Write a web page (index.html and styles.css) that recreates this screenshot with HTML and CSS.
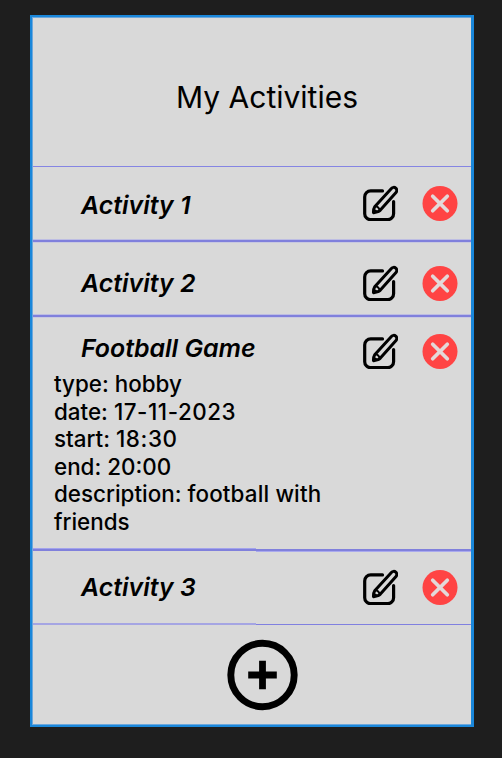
FILE: index.html
```
<!DOCTYPE html>
<html lang="en">
<head>
<meta charset="utf-8">
<title>My Activities</title>
<link rel="stylesheet" href="styles.css">
</head>
<body>
<svg class="symbols" aria-hidden="true">
  <symbol id="edit" viewBox="0 0 36 36">
    <g fill="none" stroke="#000" stroke-width="3.200" stroke-linecap="round" stroke-linejoin="round">
      <path d="M20.500 5.900H8.700a6 6 0 0 0-6 6v16.800a6 6 0 0 0 6 6h16.900a6 6 0 0 0 6-6V16.500"/>
      <path stroke-width="3" d="M12.700 21.700 29.400 3.400a3 3 0 0 1 4.600 4.100L18.400 25.100a8 8 0 0 1-2.200 1.400l-4.700 1.200Q11.300 24 12.700 21.700Z"/>
      <path stroke-width="2" d="M13.200 21.300q3.800.200 4.400 4.300"/>
    </g>
    <path d="m11.300 27.800 .7-3.800q3 .400 3.400 2.900Z"/>
  </symbol>
  <symbol id="remove" viewBox="0 0 36 36">
    <circle cx="18" cy="18.500" r="17.500" fill="#ff4444"/>
    <path d="m10.700 11.200 14.600 14.600m0-14.600L10.700 25.800" fill="none" stroke="#e3d9d9" stroke-width="3.700" stroke-linecap="round"/>
  </symbol>
</svg>
<main class="panel">
  <header class="header"><h1>My Activities</h1></header>
  <section class="row first">
    <h2>Activity 1</h2>
    <div class="actions"><svg><use href="#edit"/></svg><svg><use href="#remove"/></svg></div>
  </section>
  <section class="row second">
    <h2>Activity 2</h2>
    <div class="actions"><svg><use href="#edit"/></svg><svg><use href="#remove"/></svg></div>
  </section>
  <section class="row expanded">
    <h2>Football Game</h2>
    <div class="actions"><svg><use href="#edit"/></svg><svg><use href="#remove"/></svg></div>
    <p class="details">type: hobby<br>date: <span class="date">17-11-2023</span><br>start: <span class="time">18:30</span><br>end: 20:00<br>description: <span class="text">football with</span><br>friends</p>
    <div class="rule"></div>
  </section>
  <section class="row last">
    <h2>Activity 3</h2>
    <div class="actions"><svg><use href="#edit"/></svg><svg><use href="#remove"/></svg></div>
    <div class="rule thin"></div>
  </section>
  <footer class="footer">
    <svg class="add" viewBox="0 0 70 70"><circle cx="35.500" cy="35" r="31.700" fill="none" stroke="#000" stroke-width="6.900"/><path d="M35.500 20.700v28.600M21.200 35h28.600" stroke="#000" stroke-width="6.800"/></svg>
  </footer>
</main>
</body>
</html>
```
FILE: styles.css
```
* { box-sizing: border-box; }
body {
  margin: 0;
  height: 758px;
  padding: 15px 28px 0 30px;
  background: #1e1e1e;
  color: #000;
  font-family: Inter, sans-serif;
  overflow: hidden;
}
.symbols { display: none; }
.panel {
  height: 712px;
  border: 2px solid #1a87da;
  border-right-width: 3px;
  background: #d9d9d9;
  box-shadow: inset 1px 1px #6ea8dc, inset 0 -1px #6ea8dc;
  display: flex;
  flex-direction: column;
}
.header {
  height: 150px;
  padding: 61px 0 0 143px;
  border-bottom: 1px solid #8585e3;
  margin-left: 1px;
}
h1, h2, p { margin: 0; }
h1 { font-size: 30px; line-height: 38px; font-weight: 400; white-space: nowrap; }
.row {
  display: grid;
  grid-template-columns: 1fr 96px;
  align-content: start;
  padding: 0 13px 0 48px;
  margin-left: 1px;
}
h2 {
  font-size: 24.9px;
  line-height: 30px;
  font-weight: 600;
  font-style: italic;
  white-space: nowrap;
}
.actions { display: flex; justify-content: space-between; height: 36px; }
.actions svg { width: 36px; height: 36px; display: block; overflow: visible; }
.first, .second {
  height: 75px;
  background: linear-gradient(#bdbde3 1px, #8080dc 1px) 0 100% / 100% 3px no-repeat;
}
.first { padding-top: 18px; }
.second { padding-top: 23px; }
.first h2 { padding-top: 5px; }
.second h2 { padding-top: 3px; }
.expanded { height: 234px; padding-top: 16px; }
.expanded h2 { padding-top: 0; }
.second, .expanded { box-shadow: inset 0 1px #c9c9e0; }
.details {
  grid-column: 1 / -1;
  margin: 1px 0 0 -27px;
  height: 179px;
  font-size: 22.4px;
  line-height: 27.5px;
  font-weight: 460;
}
.date { letter-spacing: 0.55px; }
.time { letter-spacing: 0.6px; }
.text { letter-spacing: 0.15px; }
.rule {
  grid-column: 1 / -1;
  height: 4px;
  margin: -1px -13px 0 -48px;
  background: linear-gradient(#a3a3ec 1px, #8080dc 1px) 0 0 / 223px 3px no-repeat,
    linear-gradient(#d9d9d9 1px, #8080dc 1px 3px, #a9a9ee 3px) 223px 0 / 217px 4px no-repeat;
}
.rule.thin {
  background: linear-gradient(#a5a5e3, #a5a5e3) 0 0 / 223px 2px no-repeat,
    linear-gradient(#8080e0, #8080e0) 223px 1px / 217px 1px no-repeat;
}
.last { height: 75px; padding-top: 18px; }
.last h2 { padding-top: 3px; }
.last .actions { height: 55px; }
.footer { flex: 1; padding: 14px 0 0 195px; }
.add { width: 70px; height: 70px; display: block; overflow: visible; }
```
